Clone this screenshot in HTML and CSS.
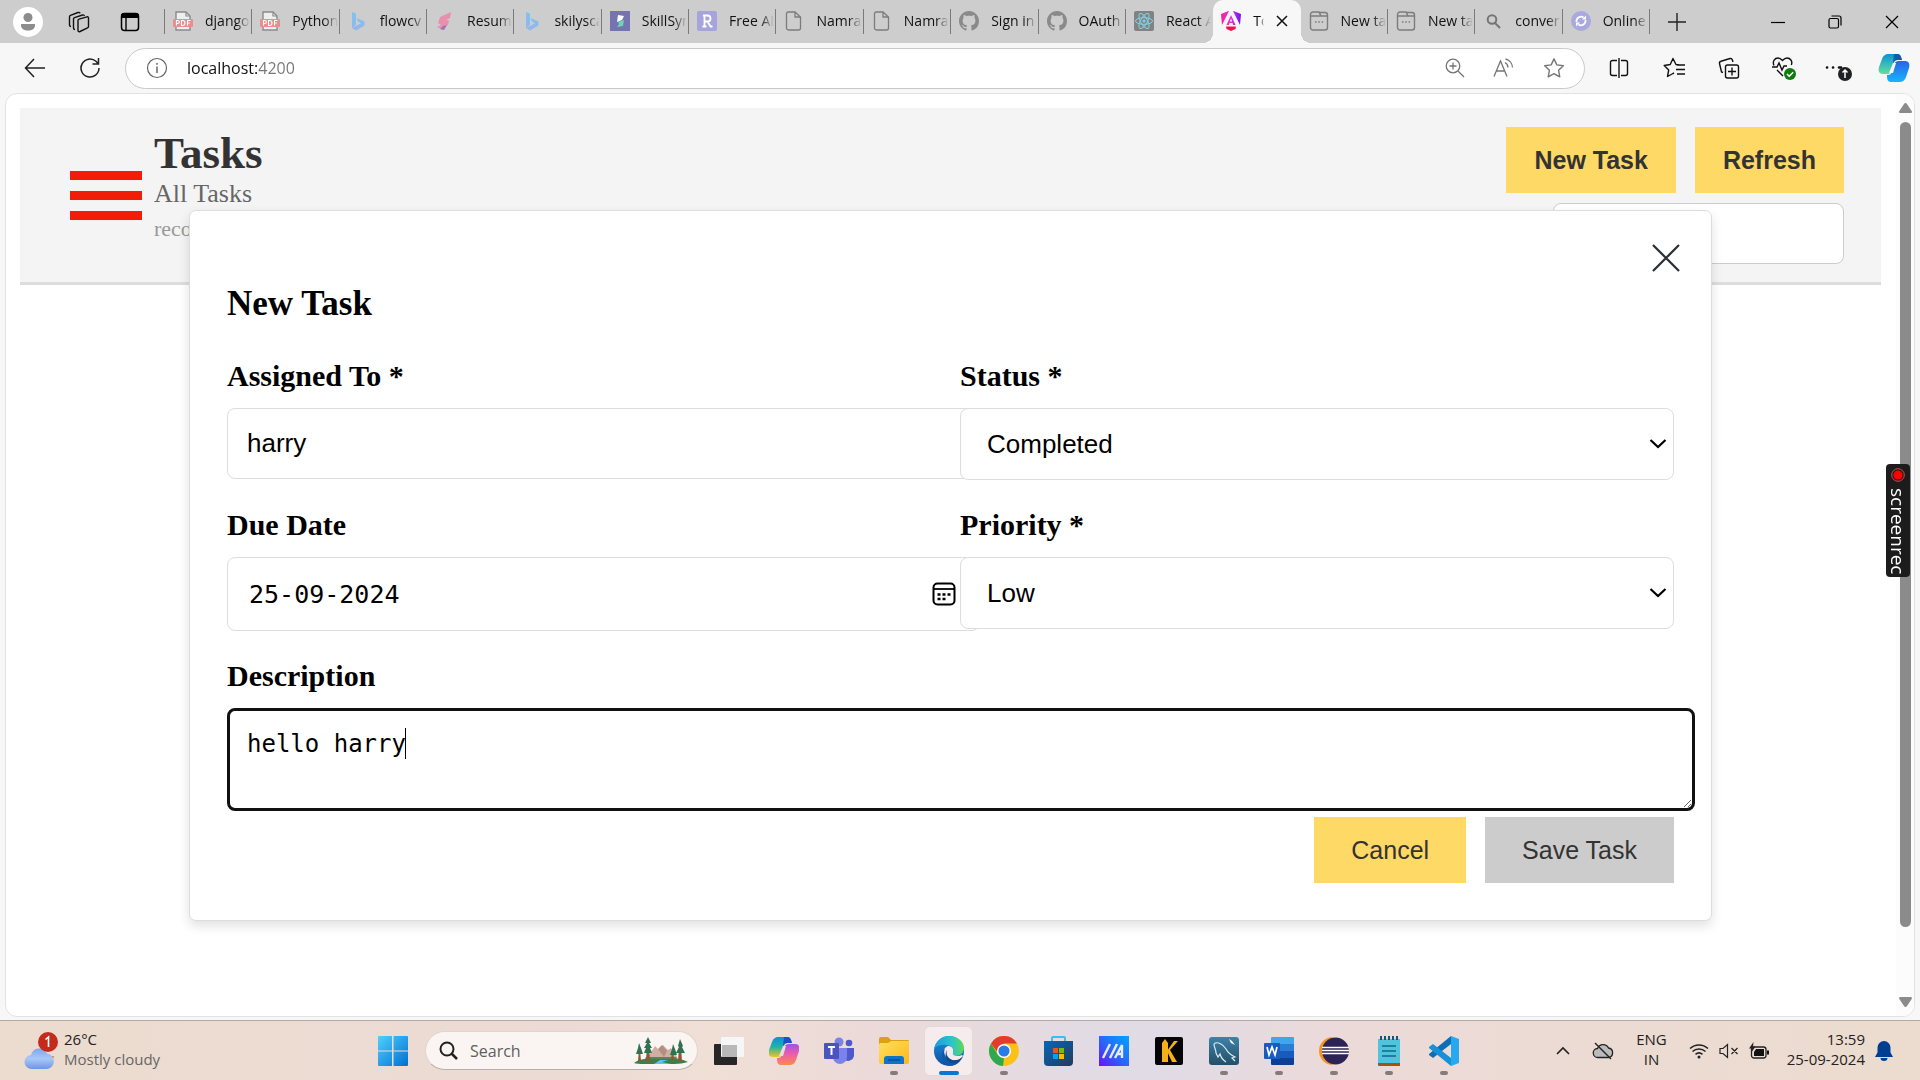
FILE: index.html
```html
<!DOCTYPE html>
<html lang="en">
<head>
<meta charset="utf-8">
<meta name="viewport" content="width=device-width, initial-scale=1">
<title>Tasks</title>
<link rel="stylesheet" href="styles.css">
</head>
<body>
<svg class="defs" aria-hidden="true">
  <defs>
    <linearGradient id="gBing" x1="0" y1="0" x2="0" y2="1"><stop offset="0" stop-color="#7dc4ee"/><stop offset="1" stop-color="#93b6ec"/></linearGradient>
    <linearGradient id="gWin" x1="0" y1="0" x2="1" y2="1"><stop offset="0" stop-color="#4fd0ff"/><stop offset="1" stop-color="#0070d0"/></linearGradient>
    <linearGradient id="gNg" x1="0" y1="0" x2="1" y2="0"><stop offset="0" stop-color="#f0258f"/><stop offset=".5" stop-color="#e92fe0"/><stop offset="1" stop-color="#6a14f5"/></linearGradient>
    <linearGradient id="gCopA" x1="0" y1="0" x2="0" y2="1"><stop offset="0" stop-color="#0b8fe0"/><stop offset=".5" stop-color="#22b3a6"/><stop offset="1" stop-color="#f2c51d"/></linearGradient>
    <linearGradient id="gCopB" x1="0" y1="0" x2="0" y2="1"><stop offset="0" stop-color="#a050ee"/><stop offset=".5" stop-color="#ee5fa8"/><stop offset="1" stop-color="#fb8a4a"/></linearGradient>
    <linearGradient id="gCopC" x1="0" y1="0" x2="0" y2="1"><stop offset="0" stop-color="#0c93d8"/><stop offset="1" stop-color="#62df9e"/></linearGradient>
    <linearGradient id="gCopD" x1="0" y1="0" x2="0" y2="1"><stop offset="0" stop-color="#2a63e6"/><stop offset="1" stop-color="#16b4ff"/></linearGradient>
    <linearGradient id="gEdgeA" x1="0" y1="0" x2="1" y2="0"><stop offset="0" stop-color="#1a9be0"/><stop offset=".6" stop-color="#2cc4cc"/><stop offset="1" stop-color="#62d84f"/></linearGradient>
    <linearGradient id="gEdgeB" x1="0" y1="0" x2="0" y2="1"><stop offset="0" stop-color="#1c93dc"/><stop offset="1" stop-color="#0f4fa0"/></linearGradient>
    <linearGradient id="gFold" x1="0" y1="0" x2="1" y2="1"><stop offset="0" stop-color="#ffdf62"/><stop offset="1" stop-color="#fcb815"/></linearGradient>
    <linearGradient id="gStore" x1="0" y1="0" x2="1" y2="1"><stop offset="0" stop-color="#0767b7"/><stop offset="1" stop-color="#243a60"/></linearGradient>
    <linearGradient id="gMy" x1="1" y1="0" x2="0" y2="1"><stop offset="0" stop-color="#00a6ff"/><stop offset=".55" stop-color="#2b63fb"/><stop offset="1" stop-color="#6b10f8"/></linearGradient>
    <linearGradient id="gSql" x1="0" y1="0" x2="0" y2="1"><stop offset="0" stop-color="#3d83a8"/><stop offset="1" stop-color="#234f68"/></linearGradient>
    <linearGradient id="gCloud" x1="0" y1="0" x2="0" y2="1"><stop offset="0" stop-color="#7fa6ee"/><stop offset=".5" stop-color="#a9c7f8"/><stop offset="1" stop-color="#6d95e4"/></linearGradient>
    <symbol id="pdf" viewBox="0 0 20 20"><path d="M3 1h10l4 4v14H3z" fill="#eee" stroke="#8b8b8b" stroke-width="1.4"/><path d="M13 1v4h4" fill="none" stroke="#8b8b8b" stroke-width="1.2"/><rect x="0" y="8" width="20" height="8" rx="1" fill="#e98e8e"/><path d="M3.500 14.500v-5h1.300a1.400 1.400 0 0 1 0 3H3.500M8.500 14.500v-5h1a2.500 2.500 0 0 1 0 5zM14.500 14.500v-5h3M14.500 12h2.300" fill="none" stroke="#fff" stroke-width="1.100"/></symbol>
    <symbol id="bing" viewBox="0 0 20 20"><path d="M4 1l4 1.600v11.200l-4 3.200zM8.500 7l8 3.500v4L8 19.500 4 17l9-4.800-3-1.600z" fill="url(#gBing)"/></symbol>
    <symbol id="page" viewBox="0 0 20 20"><path d="M4 1h7l5.500 5v11a2 2 0 0 1-2 2H4.500a2 2 0 0 1-2-2V2.500A1.500 1.500 0 0 1 4 1zM11 1v5h5.500" fill="none" stroke="#7c7c7c" stroke-width="1.300"/></symbol>
    <symbol id="github" viewBox="0 0 16 16"><path fill="#8a8a8a" d="M8 0C3.580 0 0 3.580 0 8c0 3.540 2.290 6.530 5.470 7.590.4.070.55-.17.55-.38 0-.19-.01-.82-.01-1.490-2.010.37-2.530-.49-2.690-.94-.09-.23-.48-.94-.82-1.130-.28-.15-.68-.52-.01-.53.63-.01 1.080.58 1.230.82.72 1.210 1.870.87 2.330.66.07-.52.28-.87.51-1.070-1.780-.2-3.640-.89-3.640-3.950 0-.87.31-1.590.82-2.150-.08-.2-.36-1.020.08-2.120 0 0 .67-.21 2.200.82.64-.18 1.320-.27 2-.27s1.360.09 2 .27c1.530-1.040 2.200-.82 2.200-.82.44 1.100.16 1.920.08 2.120.51.56.82 1.270.82 2.150 0 3.070-1.870 3.750-3.650 3.950.29.25.54.73.54 1.480 0 1.070-.01 1.930-.01 2.200 0 .21.15.46.55.38A8.010 8.010 0 0 0 16 8c0-4.420-3.580-8-8-8z"/></symbol>
    <symbol id="newtab" viewBox="0 0 20 20"><path d="M4 1h6l2 4h6.500v11.500a2.500 2.500 0 0 1-2.500 2.500H4a2.500 2.500 0 0 1-2.500-2.500v-13A2.500 2.500 0 0 1 4 1zM10.500 1.500H16a2.500 2.500 0 0 1 2.500 2.500v2M1.500 5H12" fill="none" stroke="#7c7c7c" stroke-width="1.400"/><path d="M6 11h1.500M9.300 11h1.500M12.600 11h1.500" stroke="#7c7c7c" stroke-width="1.700"/></symbol>
  </defs>
</svg>

<header class="tabstrip">
  <div class="strip-tools">
    <button class="tool" aria-label="Profile"><svg width="30" height="30" viewBox="0 0 30 30"><circle cx="15" cy="15" r="15" fill="#fff"/><circle cx="15" cy="10.500" r="4.500" fill="#8c8c8c"/><path d="M8 17h14v1.500c0 3-3 5-7 5s-7-2-7-5z" fill="#8c8c8c"/></svg></button>
    <button class="tool" aria-label="Workspaces"><svg width="22" height="22" viewBox="0 0 22 22" fill="none" stroke="#111" stroke-width="1.400" stroke-linejoin="round"><path d="M10 9.500q0-1 1-1.300l8-2.400q1.500-.3 1.500 1.200v8.500q0 1-1 1.400l-7.500 3.600q-2 .7-2-1.300zM7 18.500q-1.500 0-1.500-1.500V8q0-1 1-1.400l8-2.600q1.500-.4 2 1M3 15.500q-1.500 0-1.500-1.500V6q0-1.200 1-1.600L10 1.500q1.500-.5 2.200.8"/></svg></button>
    <button class="tool" aria-label="Tab actions"><svg width="20" height="20" viewBox="0 0 20 20"><rect x="1.500" y="1.500" width="17" height="17" rx="3" fill="none" stroke="#000" stroke-width="1.500"/><path d="M1 6V4a3 3 0 0 1 3-3h12a3 3 0 0 1 3 3v2z"/><path d="M6 6v12" stroke="#000" stroke-width="1.400"/></svg></button>
  </div>
  <nav class="tabs" aria-label="Tabs">
    <a class="tab" href="#"><svg class="fav"><use href="#pdf"/></svg><span>django</span></a>
    <a class="tab" href="#"><svg class="fav"><use href="#pdf"/></svg><span>Python</span></a>
    <a class="tab" href="#"><svg class="fav"><use href="#bing"/></svg><span>flowcv</span></a>
    <a class="tab" href="#"><svg class="fav" viewBox="0 0 20 20"><path d="M5 6l11-5-1 6-4 2 3 .5-1 4.500-4 1-1 4-6-3 4-2-3-2z" fill="#ea8fae"/><path d="M8 15l4-1-3 5-4-1z" fill="#9a76b8"/></svg><span>Resum</span></a>
    <a class="tab" href="#"><svg class="fav"><use href="#bing"/></svg><span>skilysca</span></a>
    <a class="tab" href="#"><svg class="fav" viewBox="0 0 20 20"><path d="M0 0h20v20H0z" fill="#7573b0"/><path d="M8 4l6 1-2 4-5 2z" fill="#fff"/><path d="M8 11l6-2-1 6-6 1 2-3z" fill="#6fd3b5"/></svg><span>SkillSyn</span></a>
    <a class="tab" href="#"><svg class="fav" viewBox="0 0 20 20"><rect width="20" height="20" rx="2" fill="#a5a4dd"/><path d="M6 4.500h4.500a3 3 0 0 1 0 6H7.500M7.500 4.500v11M5.500 15.500h4M10.500 10.500l3 5h2" fill="none" stroke="#fff" stroke-width="1.800"/></svg><span>Free AI</span></a>
    <a class="tab" href="#"><svg class="fav"><use href="#page"/></svg><span>Namra</span></a>
    <a class="tab" href="#"><svg class="fav"><use href="#page"/></svg><span>Namra</span></a>
    <a class="tab" href="#"><svg class="fav"><use href="#github"/></svg><span>Sign in</span></a>
    <a class="tab" href="#"><svg class="fav"><use href="#github"/></svg><span>OAuth</span></a>
    <a class="tab tab-before" href="#"><svg class="fav" viewBox="0 0 20 20"><rect width="20" height="20" rx="2" fill="#828282"/><g fill="none" stroke="#7fd3e8" stroke-width="1"><ellipse cx="10" cy="10" rx="8.500" ry="3.300"/><ellipse cx="10" cy="10" rx="8.500" ry="3.300" transform="rotate(60 10 10)"/><ellipse cx="10" cy="10" rx="8.500" ry="3.300" transform="rotate(120 10 10)"/></g><circle cx="10" cy="10" r="1.500" fill="#7fd3e8"/></svg><span>React A</span></a>
    <a class="tab tab-active" href="#"><svg class="fav" viewBox="0 0 20 20"><path d="M7.500 0L0 3l1 11L8 0zM12.500 0L20 3l-1 11L12 0zM10 4l4.500 10h-2.300l-.8-2H8.600l-.8 2H5.500z" fill="url(#gNg)"/><path d="M5 15.500h10L14.500 18 10 20l-4.500-2z" fill="#f3104e"/><path d="M10 7.500l1.100 3H8.900z" fill="#f7f7f7"/></svg><span>To</span><svg class="tab-close" width="12" height="12" viewBox="0 0 12 12"><path d="M1 1l10 10M11 1L1 11" stroke="#111" stroke-width="1.500"/></svg></a>
    <a class="tab" href="#"><svg class="fav"><use href="#newtab"/></svg><span>New ta</span></a>
    <a class="tab" href="#"><svg class="fav"><use href="#newtab"/></svg><span>New ta</span></a>
    <a class="tab" href="#"><svg class="fav" viewBox="0 0 20 20"><circle cx="9" cy="8.500" r="4.300" fill="none" stroke="#757575" stroke-width="2"/><path d="M12 12l5 5" stroke="#757575" stroke-width="2"/></svg><span>conver</span></a>
    <a class="tab" href="#"><svg class="fav" viewBox="0 0 20 20"><circle cx="10" cy="10" r="10" fill="#a9a9e0"/><path d="M5.500 11V9.500a4.500 4.500 0 0 1 7-3M14.500 9v1.500a4.500 4.500 0 0 1-7 3" fill="none" stroke="#fff" stroke-width="1.800"/><path d="M11 8.500h4v-4zM9 11.500H5v4z" fill="#fff"/></svg><span>Online</span></a>
  </nav>
  <div class="window-controls">
    <button class="tool newtab" aria-label="New tab"><svg width="18" height="18" viewBox="0 0 18 18"><path d="M9 0v18M0 9h18" stroke="#222" stroke-width="1.400"/></svg></button>
    <button class="tool win" aria-label="Minimize"><svg width="14" height="14" viewBox="0 0 14 14"><path d="M0 7.500h14" stroke="#000" stroke-width="1.200"/></svg></button>
    <button class="tool win" aria-label="Restore"><svg width="14" height="14" viewBox="0 0 14 14" fill="none" stroke="#000" stroke-width="1.200"><rect x="1" y="3.500" width="9.500" height="9.500" rx="1.500"/><path d="M3.500 1H11a2 2 0 0 1 2 2v7.500"/></svg></button>
    <button class="tool win" aria-label="Close window"><svg width="14" height="14" viewBox="0 0 14 14"><path d="M1 1l12 12M13 1L1 13" stroke="#000" stroke-width="1.200"/></svg></button>
  </div>
</header>

<div class="toolbar">
  <button class="tool bar-btn" aria-label="Back"><svg width="22" height="20" viewBox="0 0 22 20"><path d="M10 1L1.500 10l8.500 9M1.500 10H21" fill="none" stroke="#222" stroke-width="1.500"/></svg></button>
  <button class="tool bar-btn" aria-label="Reload"><svg width="22" height="22" viewBox="0 0 22 22"><path d="M20 11a9 9 0 1 1-3-6.700L19 6.500M19.500 1v6h-6" fill="none" stroke="#222" stroke-width="1.500"/></svg></button>
  <div class="address">
    <svg width="22" height="22" viewBox="0 0 22 22"><circle cx="11" cy="11" r="9.500" fill="none" stroke="#666" stroke-width="1.200"/><path d="M11 9.500V16M11 6v1.700" stroke="#666" stroke-width="1.500"/></svg>
    <input class="url" type="text" value="localhost:4200" aria-label="Address">
    <svg width="20" height="20" viewBox="0 0 20 20" fill="none" stroke="#757575" stroke-width="1.300"><circle cx="8" cy="8" r="6.800"/><path d="M13 13l6 6M8 4.500v7M4.500 8h7"/></svg>
    <svg width="22" height="20" viewBox="0 0 22 20" fill="none" stroke="#757575" stroke-width="1.300"><path d="M1 18.500L7.500 3 14 18.500M3.500 13h8M12 4.500a6 6 0 0 1 3 5M12.500 1a9 9 0 0 1 7 8.500"/></svg>
    <svg width="22" height="22" viewBox="0 0 24 24" fill="none" stroke="#757575" stroke-width="1.500" stroke-linejoin="round"><path d="M12 2l3.100 6.600 7.100.9-5.200 5 1.300 7.200L12 18.200l-6.300 3.500L7 14.500l-5.200-5 7.100-.9z"/></svg>
  </div>
  <button class="tool bar-btn" aria-label="Split screen"><svg width="20" height="20" viewBox="0 0 20 20" fill="none" stroke="#111" stroke-width="1.400"><path d="M8 2.500H3.500a2 2 0 0 0-2 2v11a2 2 0 0 0 2 2H8M12 2.500h4.500a2 2 0 0 1 2 2v11a2 2 0 0 1-2 2H12M10 0v20"/></svg></button>
  <button class="tool bar-btn" aria-label="Favorites"><svg width="22" height="22" viewBox="0 0 22 22" fill="none" stroke="#111" stroke-width="1.400" stroke-linejoin="round"><path d="M16.500 8L13 7.500 10 1.500l-2.800 6-6 1 4.500 4.500-1.200 6.500L10 16.500l1-.5M14 8h8M13 12.500h9M14 17h8"/></svg></button>
  <button class="tool bar-btn" aria-label="Collections"><svg width="22" height="22" viewBox="0 0 22 22" fill="none" stroke="#111" stroke-width="1.400"><rect x="7.500" y="8" width="13" height="13" rx="2"/><path d="M14 10.500v8M10 14.500h8M5 15.500L3.500 15 1.500 6.500a2 2 0 0 1 1.500-2.300l9-2.700a2 2 0 0 1 2.300 1.300L15 5"/></svg></button>
  <button class="tool bar-btn" aria-label="Browser essentials"><svg width="26" height="24" viewBox="0 0 26 24" fill="none" stroke="#111" stroke-width="1.400"><path d="M3 9.500C1 5 4 2 7 2c2.500 0 4 2 4.500 2.500C12 4 13.500 2 16 2c3 0 6 3 4.300 7M1 11h5l2-4 3 7 2-4h3M6 14l6 6"/><circle cx="19" cy="18" r="6" fill="#107c10" stroke="none"/><path d="M16 18l2.200 2.200 4-4" stroke="#fff" stroke-width="1.500"/></svg></button>
  <button class="tool bar-btn" aria-label="Settings and more"><svg width="28" height="28" viewBox="0 0 28 28"><path d="M2 13.500h.1M8 13.500h.1M14 13.500h2" stroke="#111" stroke-width="2.600" stroke-linecap="round"/><circle cx="20" cy="20" r="7" fill="#202124"/><path d="M20 24v-8M17.500 18.500L20 16l2.500 2.500" fill="none" stroke="#fff" stroke-width="1.500"/></svg></button>
  <button class="tool bar-btn" aria-label="Copilot"><svg width="32" height="28" viewBox="0 0 30 28"><path d="M10 0h8c3 0 4 2 5 6h-4c-3 0-4 2-5 6l-1 4c-1 3-2 4-5 4H4c-4 0-5-3-4-7L3 5c1-3 3-5 7-5z" fill="url(#gCopC)"/><path d="M20 28h-8c-3 0-4-2-4-7 4 0 5-2 6-6l1-4c1-3 2-4 5-4h6c4 0 5 3 4 7l-3 9c-1 3-3 5-7 5z" fill="url(#gCopD)"/><path d="M15 0h4c2 0 3 2 4 6h-5c-2 0-3 1-4 3z" fill="#0b5ea8"/><path d="M14 9h3l-3 10h-4z" fill="#f7f7f7"/></svg></button>
</div>

<div class="viewport">
  <main class="page">
    <section class="task-header">
      <button class="burger" aria-label="Menu"><svg width="72" height="49" viewBox="0 0 72 49"><path d="M0 4.500h72M0 24.500h72M0 44.500h72" stroke="#f11d06" stroke-width="9"/></svg></button>
      <div class="headings">
        <h1>Tasks</h1>
        <p class="subtitle">All Tasks</p>
        <p class="count">records</p>
      </div>
      <div class="header-actions">
        <div class="action-row">
          <button class="btn btn-strong">New Task</button>
          <button class="btn btn-strong">Refresh</button>
        </div>
        <input class="search" type="text" aria-label="Search tasks">
      </div>
    </section>

    <form class="modal" role="dialog" aria-labelledby="modal-title">
      <button class="close" type="button" aria-label="Close"><svg width="28" height="28" viewBox="0 0 28 28"><path d="M1 1l26 26M27 1L1 27" stroke="#2b2f33" stroke-width="2.200"/></svg></button>
      <h2 id="modal-title">New Task</h2>
      <div class="fields">
        <div class="field">
          <label for="assigned">Assigned To *</label>
          <input class="control wide" id="assigned" type="text" value="harry">
        </div>
        <div class="field">
          <label for="status">Status *</label>
          <div class="stack">
            <select class="control" id="status"><option>Completed</option></select>
            <svg class="chevron" width="18" height="10" viewBox="0 0 18 10"><path d="M1.500 1L9 8l7.500-7" fill="none" stroke="#000" stroke-width="2.200"/></svg>
          </div>
        </div>
        <div class="field">
          <label for="due">Due Date</label>
          <div class="stack wide">
            <input class="control date" id="due" type="text" value="25-09-2024">
            <svg class="calendar" width="24" height="24" viewBox="0 0 24 24"><rect x="1.500" y="1.500" width="21" height="21" rx="4" fill="none" stroke="#000" stroke-width="2"/><path d="M1.500 7h21" stroke="#000" stroke-width="1.800"/><path d="M5.500 12.500h3M10.500 12.500h3M15.500 12.500h3M5.500 17h3M10.500 17h3" stroke="#000" stroke-width="2.400"/></svg>
          </div>
        </div>
        <div class="field">
          <label for="priority">Priority *</label>
          <div class="stack">
            <select class="control" id="priority"><option>Low</option></select>
            <svg class="chevron" width="18" height="10" viewBox="0 0 18 10"><path d="M1.500 1L9 8l7.500-7" fill="none" stroke="#000" stroke-width="2.200"/></svg>
          </div>
        </div>
        <div class="field field-full">
          <label for="description">Description</label>
          <div class="editor">
            <textarea id="description">hello harry</textarea>
            <span class="caret"></span>
          </div>
        </div>
      </div>
      <div class="modal-actions">
        <button class="btn" type="button">Cancel</button>
        <button class="btn btn-muted" type="button">Save Task</button>
      </div>
    </form>
  </main>
  <div class="scrollbar" aria-hidden="true">
    <svg width="13" height="10" viewBox="0 0 13 10"><path d="M6.500 0Q7.500 0 8 1l5 7.500q0 1.500-1 1.500H1Q0 10 0 8.500L5 1q.5-1 1.500-1z" fill="#8b8b8b"/></svg>
    <div class="track"><div class="thumb"></div></div>
    <svg width="13" height="10" viewBox="0 0 13 10"><path d="M6.500 10Q7.500 10 8 9l5-7.500Q13 0 12 0H1Q0 0 0 1.500L5 9q.5 1 1.500 1z" fill="#8b8b8b"/></svg>
  </div>
</div>

<div class="recorder">
  <svg width="14" height="14" viewBox="0 0 14 14"><circle cx="7" cy="7" r="6.300" fill="none" stroke="#d94a4a" stroke-width="1"/><circle cx="7" cy="7" r="4.600" fill="#f00"/></svg>
  <span>screenrec</span>
</div>

<footer class="taskbar">
  <div class="weather">
    <svg width="36" height="38" viewBox="0 0 36 38"><path d="M22 24h8l-2 7h-6z" fill="#ef7d1a"/><path d="M8 37a7 7 0 0 1-1-14 8.500 8.500 0 0 1 16-1.500A7.800 7.800 0 0 1 23 37z" fill="url(#gCloud)"/><circle cx="24" cy="10" r="10" fill="#c42b1c"/><path d="M21.500 7.500L24.500 5v10" fill="none" stroke="#fff" stroke-width="1.600"/></svg>
    <div class="weather-text"><span>26°C</span><span class="dim">Mostly cloudy</span></div>
  </div>
  <div class="apps">
    <button class="app" aria-label="Start"><svg width="30" height="30" viewBox="0 0 30 30" fill="url(#gWin)"><path d="M0 1q0-1 1-1h13v14.500H0zM15.500 0H29q1 0 1 1v13.500H15.500zM0 15.500h14V30H1q-1 0-1-1zM15.500 15.500H30V29q0 1-1 1H15.500z"/></svg></button>
    <label class="find">
      <svg width="19" height="19" viewBox="0 0 19 19"><circle cx="8" cy="8" r="6.500" fill="none" stroke="#222" stroke-width="2"/><path d="M12.500 12.500L18 18" stroke="#222" stroke-width="2.500"/></svg>
      <input type="text" placeholder="Search" aria-label="Search">
      <svg width="54" height="30" viewBox="0 0 54 30"><path d="M12 24l9-14 4 4 4-5 5 5 3-2 8 12z" fill="#cdb0a2"/><path d="M24 13l4-4 5 6-3 6z" fill="#b48e80"/><path d="M12 21h30l2 4H10z" fill="#4f8a58"/><path d="M0 27q7-5 18-4h18q10-1 18 3-6 2-14 2H10q-7 0-10-1z" fill="#3f7d4b"/><path d="M20 28l6-4h8l-6 2 9 2z" fill="#59c4ee"/><g fill="#8a5a34"><path d="M13 8h2l1 17h-4zM5 13h1l1 12H4zM45 10h2l1 16h-4zM38 14h1l1 10h-3z"/></g><g fill="#2f7150"><path d="M14 1l3 6h-2l3 5h-2l2 5h-8l2-5h-2l3-5h-2zM5 7l2 5 2 6H2l2-6zM46 3l3 7-1 1 3 6H42l3-6-1-1zM39 8l2 5 2 6h-7l2-6z"/></g></svg>
    </label>
    <button class="app" aria-label="Task view"><svg width="30" height="28" viewBox="0 0 30 28"><rect y="7" width="23" height="21" rx="1" fill="#262626"/><rect x="7" width="23" height="20" rx="1" fill="#f6f6f6"/><path d="M8 8h15v12H8z" fill="#b8b8b8"/></svg></button>
    <button class="app" aria-label="Copilot"><svg width="30" height="28" viewBox="0 0 30 28"><path d="M10 0h8c3 0 4 2 5 6h-4c-3 0-4 2-5 6l-1 4c-1 3-2 4-5 4H4c-4 0-5-3-4-7L3 5c1-3 3-5 7-5z" fill="url(#gCopA)"/><path d="M15 0h4c2 0 3 2 4 6h-5c-2 0-3 1-4 3z" fill="#1c50c8"/><path d="M20 28h-8c-3 0-4-2-4-7 4 0 5-2 6-6l1-4c1-3 2-4 5-4h6c4 0 5 3 4 7l-3 9c-1 3-3 5-7 5z" fill="url(#gCopB)"/><path d="M14 9h3l-3 10h-4z" fill="#eedbdb"/></svg></button>
    <button class="app" aria-label="Teams"><svg width="30" height="28" viewBox="0 0 30 28"><circle cx="15" cy="5" r="4.500" fill="#7b83eb"/><circle cx="25" cy="6" r="3.300" fill="#5059c9"/><path d="M21 11h9v8a6 6 0 0 1-9 4z" fill="#5059c9"/><path d="M9 11h14v9a7 7 0 0 1-14 0z" fill="#7b83eb"/><rect y="6" width="15" height="16" rx="1" fill="#4b53bc"/><path d="M4 10h7M7.500 10v8" stroke="#fff" stroke-width="2"/></svg></button>
    <button class="app running" aria-label="File Explorer"><svg width="30" height="27" viewBox="0 0 30 27"><path d="M0 10V2q0-2 2-2h7l3 3h17q1 0 1 1v6z" fill="#dfa00f"/><path d="M0 8q0-2 2-2h7l3-2h18v21q0 2-2 2H2q-2 0-2-2z" fill="url(#gFold)"/><path d="M5 27v-5q0-3 3-3h14q3 0 3 3v5z" fill="#0d75c7"/><path d="M9 23h12" stroke="#0a4f96" stroke-width="1.500"/></svg></button>
    <button class="app current" aria-label="Edge"><svg width="30" height="30" viewBox="0 0 30 30"><circle cx="15" cy="15" r="15" fill="url(#gEdgeB)"/><path d="M0 13C2 5 8 0 15 0c9 0 15 6 15 12 0 5-4 8-8 8-3 0-4-1-3-3 2-4-1-7-6-8C7 8 2 10 0 13z" fill="url(#gEdgeA)"/><path d="M10 15c0-3 3-5 5-5 4 1 5 4 4 7-1 3 5 4 9 2l1 1c-3 4-8 6-12 4-4-1-7-5-7-9z" fill="#f5eaec"/><path d="M11 13c-3 6 1 13 9 13 4 0 6-2 7-3-3 6-9 8-14 6-6-3-7-12-2-16z" fill="#0f57a8"/><path d="M13 14c-2 6 3 11 9 10 3 0 5-2 6-3-1 3-5 7-10 6-6-1-8-9-5-13z" fill="#114a8b"/></svg></button>
    <button class="app running" aria-label="Chrome"><svg width="30" height="30" viewBox="0 0 30 30"><circle cx="15" cy="15" r="15" fill="#fbc116"/><path d="M2 7.500l7 11.500q2 3 6 3.500L14 30A15 15 0 0 1 2 7.500z" fill="#2da94f"/><path d="M15 7.500H28A15 15 0 0 0 2 7.500l6 8z" fill="#e33b2e"/><circle cx="15" cy="15" r="7" fill="#fff"/><circle cx="15" cy="15" r="5.600" fill="#2a7be4"/></svg></button>
    <button class="app" aria-label="Microsoft Store"><svg width="30" height="30" viewBox="0 0 30 30"><path d="M8 6V2q0-1 1-1h11q1 0 1 1v4" fill="none" stroke="#35c0f2" stroke-width="2"/><path d="M0 5h29v21q0 4-4 4H4q-4 0-4-4z" fill="url(#gStore)"/><path d="M9 12h5v5H9z" fill="#f25022"/><path d="M15 12h5v5h-5z" fill="#7fba00"/><path d="M9 18h5v5H9z" fill="#00a4ef"/><path d="M15 18h5v5h-5z" fill="#ffb900"/></svg></button>
    <button class="app" aria-label="MyASUS"><svg width="30" height="30" viewBox="0 0 30 30"><path d="M0 0h30v30H0z" fill="url(#gMy)"/><path d="M4 22L11 8M11 22l7-14M16 22l7-13v13M19 18h4" fill="none" stroke="#e8ecff" stroke-width="2.400"/></svg></button>
    <button class="app" aria-label="K app"><svg width="28" height="28" viewBox="0 0 28 28"><rect width="28" height="28" rx="2" fill="#050505"/><path d="M10 2l3 4v19H7V6zM19 4h4l-8 9 7 12h-5l-5-11z" fill="#f5b117"/></svg></button>
    <button class="app running" aria-label="MySQL Workbench"><svg width="30" height="30" viewBox="0 0 30 30"><rect y="1" width="30" height="28" rx="3" fill="url(#gSql)"/><path d="M5 8c3-3 9 0 12 5 2 4 5 6 9 8l-3 1 3 3M5 8c0 4 2 5 2 9l2 4 2-3c1 4 3 6 6 8" fill="none" stroke="#dbe9f0" stroke-width="1.200"/><path d="M20 3l3 2 3 4-4-2z" fill="#fff"/></svg></button>
    <button class="app running" aria-label="Word"><svg width="30" height="28" viewBox="0 0 30 28"><path d="M7 1q0-1 1-1h21q1 0 1 1v6H7z" fill="#41a5ee"/><path d="M7 7h23v7H7z" fill="#2b7cd3"/><path d="M7 14h23v7H7z" fill="#185abd"/><path d="M7 21h23v6q0 1-1 1H8q-1 0-1-1z" fill="#103f91"/><rect y="6" width="16" height="16" rx="1" fill="#185abd"/><path d="M3 10l2 8 3-8 3 8 2-8" fill="none" stroke="#fff" stroke-width="1.700"/></svg></button>
    <button class="app running" aria-label="Eclipse"><svg width="30" height="28" viewBox="0 0 30 28"><path d="M14 0A14 14 0 0 0 14 28A16 16 0 0 1 14 0z" fill="#f7941e"/><circle cx="16.500" cy="14" r="13.500" fill="#2c2255"/><path d="M3 10.500h27M3 13.500h27M3 16.500h27" stroke="#fff" stroke-width="1.500"/></svg></button>
    <button class="app running" aria-label="Notepad"><svg width="24" height="30" viewBox="0 0 24 30"><path d="M1 3h22v24H1z" fill="#50c4dc"/><path d="M1 27h22v3H2q-1 0-1-1z" fill="#a5530c"/><path d="M4 0v4M8 0v4M12 0v4M16 0v4M20 0v4" stroke="#0b5a78" stroke-width="2"/><path d="M5 10h14M5 15h14M5 20h14" stroke="#0c6a88" stroke-width="1.700"/></svg></button>
    <button class="app running" aria-label="Visual Studio Code"><svg width="30" height="30" viewBox="0 0 30 30"><path d="M22 0l8 3v24l-8 3z" fill="#27a9f2"/><path d="M22 0v8L4 22l-4-3v-1z" fill="#0b6fb5"/><path d="M22 30v-8L4 8l-4 3v1z" fill="#1690d8"/></svg></button>
  </div>
  <div class="tray">
    <svg width="14" height="14" viewBox="0 0 14 14"><path d="M1 10l6-6 6 6" fill="none" stroke="#222" stroke-width="1.600"/></svg>
    <svg width="22" height="18" viewBox="0 0 22 18"><path d="M6 15.500a4.500 4.500 0 0 1-.5-9 6 6 0 0 1 11-.5 4.800 4.800 0 0 1 0 9.500z" fill="#bbb" stroke="#222" stroke-width="1.300"/><path d="M3 1l16 16" stroke="#222" stroke-width="1.400"/></svg>
    <div class="lang"><span>ENG</span><span>IN</span></div>
    <div class="status-icons">
      <svg width="20" height="18" viewBox="0 0 20 18" fill="none" stroke="#222" stroke-width="1.500"><path d="M1 6.500a13 13 0 0 1 18 0M3.500 9.500a9.500 9.500 0 0 1 13 0M6.500 12.300a5.500 5.500 0 0 1 7 0"/><circle cx="10" cy="15" r="1.500" fill="#222" stroke="none"/></svg>
      <svg width="20" height="16" viewBox="0 0 20 16" fill="none" stroke="#222" stroke-width="1.200"><path d="M1 5.500h3L8.500 1.500v13L4 10.500H1zM12.500 5l6 6M18.500 5l-6 6"/></svg>
      <svg width="20" height="18" viewBox="0 0 20 18"><path d="M4.500 0L0 6.500h2.500L2 11l4.500-6.500H4z" fill="#222"/><rect x="2.500" y="5" width="14.500" height="11" rx="2.500" fill="none" stroke="#222" stroke-width="1.300"/><path d="M7 7h8v7H5v-4zM18 8.500h2v4h-2z" fill="#111"/></svg>
    </div>
    <div class="clock"><span>13:59</span><span>25-09-2024</span></div>
    <svg width="18" height="20" viewBox="0 0 18 20"><path d="M9 0a6.500 6.500 0 0 1 6.500 6.500v5L18 16H0l2.500-4.500v-5A6.500 6.500 0 0 1 9 0zM5.500 17h7a3.500 3 0 0 1-7 0z" fill="#003e92"/></svg>
  </div>
</footer>
</body>
</html>
```
FILE: styles.css
```css
* {
  box-sizing: border-box;
}

body {
  margin: 0;
  min-height: 100vh;
  display: flex;
  flex-direction: column;
  background: #f7f7f7;
  color: #000;
  font-family: "Liberation Serif", "Times New Roman", serif;
}

h1, h2, p {
  margin: 0;
}

button, input, select, textarea {
  font-family: "Liberation Sans", Arial, sans-serif;
  margin: 0;
}

svg {
  display: block;
  flex: none;
}

.defs {
  position: absolute;
  width: 0;
  height: 0;
}

.tool {
  display: flex;
  align-items: center;
  justify-content: center;
  padding: 0;
  border: 0;
  background: none;
}

/* Tab strip */
.tabstrip {
  display: flex;
  height: 43px;
  background: #cdcdcd;
  font-family: "Open Sans", "Noto Sans", sans-serif;
  font-size: 14px;
}

.strip-tools {
  display: flex;
  align-items: center;
  gap: 21px;
  width: 165px;
  padding-left: 13px;
  background: linear-gradient(#7a7a7a, #7a7a7a) no-repeat 100% 9px / 1px 25px;
}

.strip-tools .tool {
  width: 30px;
}

.tabs {
  display: grid;
  grid-template-columns: repeat(17, minmax(0, 1fr));
  flex: 1;
  min-width: 0;
}

.tab {
  position: relative;
  display: flex;
  align-items: center;
  gap: 12px;
  padding: 0 2px 2px 8px;
  color: #111;
  text-decoration: none;
}

.tab::after {
  content: "";
  position: absolute;
  right: 0;
  top: 9px;
  width: 1px;
  height: 25px;
  background: #7a7a7a;
}

.tab span {
  flex: 1;
  overflow: hidden;
  white-space: nowrap;
  -webkit-mask-image: linear-gradient(to right, #000 70%, transparent);
  mask-image: linear-gradient(to right, #000 70%, transparent);
}

.fav {
  width: 20px;
  height: 20px;
}

.tab-before::after {
  display: none;
}

.tab-active {
  background: #f7f7f7;
  border-radius: 10px 10px 0 0;
  padding-right: 13px;
}

.tab-active::before,
.tab-active::after {
  content: "";
  position: absolute;
  top: auto;
  bottom: 0;
  width: 10px;
  height: 10px;
}

.tab-active::before {
  left: -10px;
  background: radial-gradient(circle at 0 0, transparent 10px, #f7f7f7 10px);
}

.tab-active::after {
  right: -10px;
  background: radial-gradient(circle at 100% 0, transparent 10px, #f7f7f7 10px);
}

.window-controls {
  display: flex;
  width: 270px;
}

.newtab {
  width: 54px;
  margin-right: auto;
}

.win {
  width: 57px;
}

/* Toolbar */
.toolbar {
  display: flex;
  align-items: center;
  gap: 21px;
  height: 50px;
  padding: 0 9px 0 18px;
}

.bar-btn {
  width: 34px;
  height: 34px;
}

.address {
  display: flex;
  flex: 1;
  align-items: center;
  gap: 28px;
  height: 41px;
  margin: 0 -4px 0 -3px;
  padding: 0 19px 0 20px;
  border: 1px solid #c9c9c9;
  border-radius: 21px;
  background: #fff;
}

.url {
  flex: 1;
  min-width: 0;
  margin-left: -9px;
  padding: 0;
  border: 0;
  color: transparent;
  background: linear-gradient(to right, #111 70px, #767676 70px);
  -webkit-background-clip: text;
  background-clip: text;
  font-family: "Open Sans", "Noto Sans", sans-serif;
  font-size: 16px;
  line-height: 24px;
}

/* Page viewport */
.viewport {
  display: flex;
  flex: 1;
  margin: 0 5px 3px;
  border: 1px solid #e2e2e2;
  border-radius: 12px;
  background: #fff;
  overflow: hidden;
}

.page {
  position: relative;
  flex: 1;
  min-width: 0;
  padding: 14px 15px 94px 14px;
}

.scrollbar {
  display: flex;
  flex-direction: column;
  align-items: center;
  gap: 9px;
  width: 18px;
  padding: 9px 0;
  background: #fcfcfc;
}

.track {
  flex: 1;
}

.thumb {
  width: 11px;
  height: 93%;
  border-radius: 6px;
  background: #8b8b8b;
}

.task-header {
  display: flex;
  align-items: flex-start;
  padding: 19px 37px 18px 50px;
  border-bottom: 3px solid #ddd;
  background: #f4f4f4;
}

.burger {
  margin-top: 44px;
  padding: 0;
  border: 0;
  background: none;
}

.headings {
  flex: 1;
  padding-left: 12px;
}

h1 {
  color: #333;
  font-size: 45px;
  line-height: 52px;
}

.subtitle {
  color: #666;
  font-size: 26px;
  line-height: 30px;
}

.count {
  color: #999;
  font-size: 22px;
  line-height: 40px;
}

.header-actions {
  display: flex;
  flex-direction: column;
  align-items: flex-end;
  gap: 10px;
}

.action-row {
  display: flex;
  gap: 19px;
}

.btn {
  height: 66px;
  padding: 0 37px;
  border: 0;
  background: #ffd966;
  color: #333;
  font-size: 25px;
}

.btn-strong {
  padding: 0 28px;
  font-weight: bold;
}

.btn-muted {
  background: #ccc;
}

.search {
  width: 291px;
  height: 61px;
  padding: 0 16px;
  border: 1px solid #ccc;
  border-radius: 8px;
  background: #fff;
  font-size: 25px;
}

/* New task dialog */
.modal {
  position: absolute;
  top: 116px;
  left: 183px;
  right: 184px;
  display: flex;
  flex-direction: column;
  padding: 27px 37px 37px;
  border: 1px solid #ddd;
  border-radius: 7px;
  background: #fff;
  box-shadow: 0 5px 12px rgba(0, 0, 0, 0.12);
}

.close {
  align-self: flex-end;
  display: flex;
  align-items: center;
  justify-content: center;
  width: 40px;
  height: 40px;
  margin: 0 -12px 6px 0;
  padding: 0;
  border: 0;
  background: none;
}

h2 {
  font-size: 35px;
  line-height: 40px;
}

.fields {
  display: grid;
  grid-template-columns: 1fr 1fr;
  gap: 28px 19px;
  align-items: start;
  margin-top: 35px;
}

.field {
  display: grid;
  gap: 15px;
  min-width: 0;
}

.field-full {
  grid-column: 1 / -1;
}

label {
  font-size: 30px;
  font-weight: bold;
  line-height: 34px;
}

.control {
  width: 100%;
  height: 71px;
  padding: 0 19px;
  border: 1px solid #ddd;
  border-radius: 8px;
  background: #fff;
  color: #000;
  font-size: 26px;
}

.wide {
  width: calc(100% + 39px);
}

.stack {
  display: grid;
  align-items: center;
}

.stack > * {
  grid-area: 1 / 1;
}

select.control {
  position: relative;
  height: 72px;
  padding: 0 26px;
  appearance: none;
}

.chevron {
  position: relative;
  justify-self: end;
  margin-right: 7px;
  pointer-events: none;
}

.date {
  height: 74px;
  padding: 0 21px;
  font-family: "DejaVu Sans Mono", Consolas, monospace;
  font-size: 25px;
}

.calendar {
  justify-self: end;
  margin-right: 24px;
}

.editor {
  position: relative;
  width: calc(100% + 21px);
}

textarea {
  display: block;
  width: 100%;
  height: 103px;
  padding: 18px 17px;
  border: 3px solid #111;
  border-radius: 8px;
  outline: 0;
  background: #fff;
  font-family: "DejaVu Sans Mono", Consolas, monospace;
  font-size: 24px;
  line-height: 30px;
  resize: vertical;
}

.caret {
  position: absolute;
  top: 20px;
  left: 178px;
  width: 1px;
  height: 31px;
  background: #000;
}

.modal-actions {
  display: flex;
  justify-content: flex-end;
  gap: 19px;
  margin-top: 6px;
}

/* Floating recorder handle */
.recorder {
  position: fixed;
  top: 464px;
  right: 10px;
  display: flex;
  flex-direction: column;
  align-items: center;
  gap: 6px;
  width: 24px;
  height: 113px;
  padding-top: 4px;
  border-radius: 4px;
  background: #1c1c1c;
  color: #fff;
  font-family: "Open Sans", "Noto Sans", sans-serif;
  font-size: 19px;
  line-height: 24px;
}

.recorder span {
  writing-mode: vertical-rl;
}

/* Taskbar */
.taskbar {
  display: flex;
  align-items: center;
  height: 60px;
  border-top: 1px solid #b5a9a6;
  background: linear-gradient(to right, #ecdccf, #ecdbd4 30%, #f0dfd5 37%, #ecdad9 45%, #e0dbe6 60%, #ecdad9 70%, #ecdbd2 85%, #ecdccf);
  color: #222;
  font-family: "Open Sans", "Noto Sans", sans-serif;
  font-size: 15px;
  line-height: 20px;
}

.weather {
  display: flex;
  flex: 1;
  align-items: center;
  gap: 4px;
  min-width: 0;
  padding-left: 24px;
}

.weather-text,
.lang,
.clock {
  display: flex;
  flex-direction: column;
  padding-bottom: 4px;
}

.dim {
  color: #666;
}

.apps {
  display: flex;
  align-items: center;
}

.app {
  position: relative;
  display: flex;
  align-items: center;
  justify-content: center;
  width: 55px;
  height: 50px;
  padding: 0;
  border: 0;
  background: none;
}

.running::after,
.current::after {
  content: "";
  position: absolute;
  bottom: 1px;
  width: 8px;
  height: 4px;
  border-radius: 2px;
  background: #857b7b;
}

.current::before {
  content: "";
  position: absolute;
  inset: 0 3px;
  border: 1px solid #e6d9d9;
  border-radius: 6px;
  background: #f6ecee;
}

.current svg {
  position: relative;
}

.current::after {
  width: 20px;
  background: #0078d4;
}

.find {
  display: flex;
  align-items: center;
  width: 273px;
  height: 39px;
  margin: 0 3px 0 5px;
  padding: 0 9px 0 13px;
  border: 1px solid #e3d3cc;
  border-bottom-color: #b9aeab;
  border-radius: 20px;
  background: #faf5f2;
}

.find input {
  flex: 1;
  min-width: 0;
  padding: 0 0 0 12px;
  border: 0;
  background: none;
  font-family: "Open Sans", "Noto Sans", sans-serif;
  font-size: 16px;
}

.find input::placeholder {
  color: #5f5f5f;
}

.tray {
  display: flex;
  align-items: center;
  justify-content: flex-end;
  gap: 22px;
  width: 449px;
  padding-right: 27px;
}

.lang {
  align-items: center;
}

.status-icons {
  display: flex;
  align-items: center;
  gap: 10px;
}

.clock {
  align-items: flex-end;
  margin: 0 -12px 0 -4px;
}
```
